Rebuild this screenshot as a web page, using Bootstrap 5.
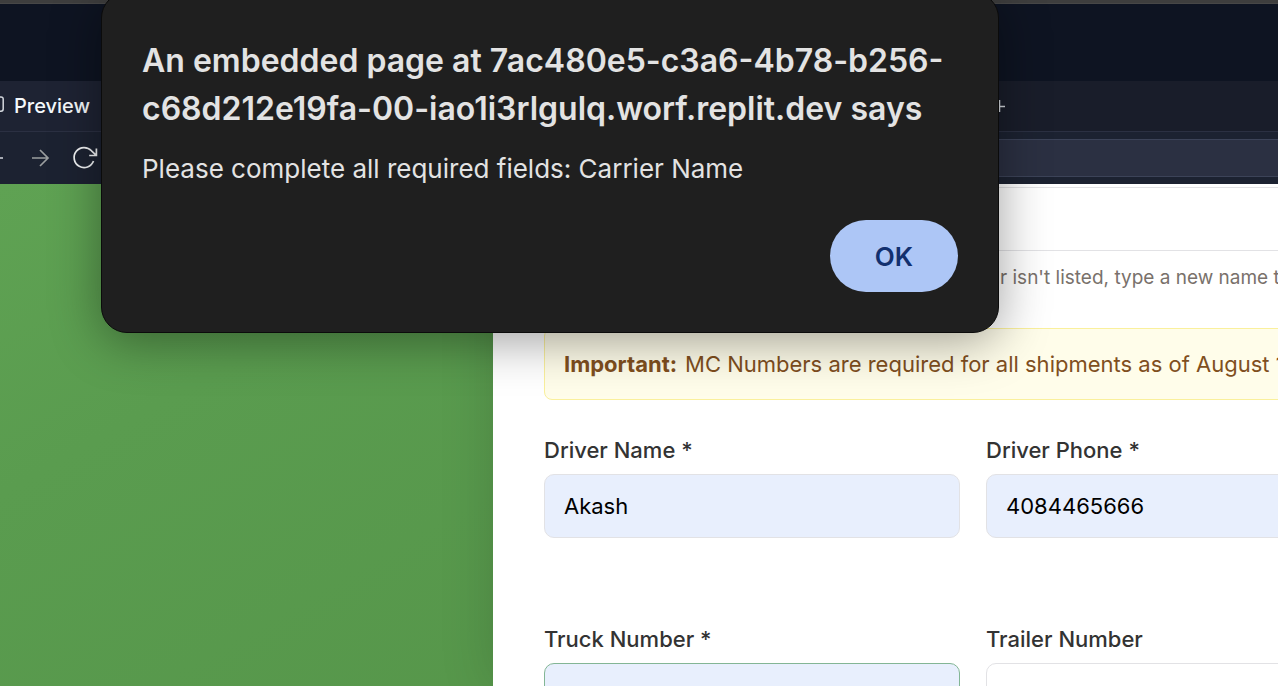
<!DOCTYPE html>
<html lang="en">
<head>
<meta charset="utf-8">
<meta name="viewport" content="width=device-width, initial-scale=1">
<title>Preview</title>
<link href="https://cdn.jsdelivr.net/npm/bootstrap@5.3.0/dist/css/bootstrap.min.css" rel="stylesheet">
<style>
  body { font-family: Inter, "Liberation Sans", sans-serif; background: #0e1422; }
  .window-edge { height: 4px; background: #3e3e3e; border-bottom: 1px solid #474747; }
  .workspace-bar { height: 77px; background: #0e1422; }
  .tab-strip { height: 51px; background: #191d2a; border-bottom: 1px solid #2b3042; }
  .tab-set { width: 1006px; }
  .tab-on { width: 380px; font-size: 20px; font-weight: 500; color: #f5f9fc; background: #1e2333; text-decoration: none; }
  .tab-on:hover { color: #fff; }
  .tool-strip { height: 52px; background: #1c2231; }
  .icon-btn { padding: 0; border: 0; background: none; line-height: 0; }
  .address { height: 38px; background: #2b3042; border: 1px solid #3c4358; border-right: 0; color: #f5f9fc; }
  .canvas-side { width: 493px; }
  .canvas { background: linear-gradient(150deg, #5fa253 0%, #5a9c4f 25%, #56964a 70%, #559449 100%); }
  .sheet { background: #fff; box-shadow: 0 0 50px rgba(0,0,0,.15); padding: 3px 0 0 51px; }
  .sheet-form { width: 858px; }
  .field { height: 64px; font-size: 22px; color: #000; padding: 0 19px; border: 1px solid #e2e2e5; border-radius: 10px; }
  .field-filled { background: #e8effd; }
  .field-valid { border-color: #83b695; }
  .form-label { font-size: 22px; line-height: 32px; font-weight: 500; color: #333; margin-bottom: 8px; }
  .hint { font-size: 19px; line-height: 28px; color: #79716b; margin-top: 13px; padding-left: 456px; }
  .notice { height: 72px; margin-top: 36px; padding: 0 19px; font-size: 22px; color: #804f1e; background: #fffdea; border: 1px solid #faf09c; border-radius: 8px; }
  .pair { display: grid; grid-template-columns: 1fr 1fr; column-gap: 26px; row-gap: 85px; margin-top: 34px; }
  .says { position: absolute; top: -8px; left: 101px; width: 898px; padding: 44px 40px 40px; background: #1f1f1f; border: 1px solid #0b0b0b; border-radius: 26px; color: #e3e3e3; box-shadow: 0 8px 50px rgba(0,0,0,.38); }
  .says h1 { font-size: 32px; line-height: 48px; font-weight: 600; margin: 0 0 16px; }
  .says p { font-size: 26px; line-height: 40px; margin: 0 0 31px; }
  .ok { width: 128px; height: 72px; border: 0; border-radius: 36px; background: #adc6f6; color: #12306f; font-size: 26px; font-weight: 600; }
</style>
</head>
<body class="vh-100 overflow-hidden d-flex flex-column position-relative">
  <div class="window-edge flex-shrink-0"></div>
  <header class="workspace-bar flex-shrink-0"></header>
  <nav class="tab-strip flex-shrink-0">
    <div class="tab-set h-100 d-flex justify-content-between">
      <a class="tab-on d-flex align-items-center gap-2" href="#">
        <svg width="6" height="20" viewBox="0 0 6 20" fill="none" stroke="#d5d9df" stroke-width="1.5"><path d="M-8 1H1Q3.200 1 3.200 3.200V13Q3.200 15.200 1 15.200H-8"/></svg>
        Preview
      </a>
      <button class="icon-btn" type="button" aria-label="New tab"><svg width="14" height="14" viewBox="0 0 14 14" fill="none" stroke="#d5d9df" stroke-width="1.500"><path d="M1 7.500h12M7.500 1v12"/></svg></button>
    </div>
  </nav>
  <div class="tool-strip flex-shrink-0 d-flex align-items-center">
    <button class="icon-btn" type="button" aria-label="Back"><svg width="20" height="20" viewBox="0 0 20 20" stroke="#d5d9df" stroke-width="1.500"><path d="M0 10h3"/></svg></button>
    <button class="icon-btn ms-2" type="button" aria-label="Forward"><svg width="24" height="24" viewBox="0 0 24 24" fill="none" stroke="#9b9e9f" stroke-width="1.700"><path d="M4 12h16M12 4l8 8-8 8"/></svg></button>
    <button class="icon-btn ms-3" type="button" aria-label="Reload"><svg width="30" height="28" viewBox="0 0 30 28" fill="none" stroke="#f1f3f5" stroke-width="1.700"><path d="M25.500 17A10 10 0 1 1 23.500 6.800L28 11.200M28.400 4.500v7h-7.200"/></svg></button>
    <input class="address flex-fill ms-5" type="text" aria-label="Address">
  </div>
  <main class="canvas flex-fill d-flex overflow-hidden">
    <div class="canvas-side flex-shrink-0"></div>
    <section class="sheet flex-fill overflow-hidden">
      <form class="sheet-form">
        <input class="field form-control" type="text" aria-label="Carrier Name">
        <div class="hint text-nowrap">r isn't listed, type a new name to</div>
        <div class="notice d-flex align-items-center text-nowrap"><strong class="me-2">Important:</strong><span class="ps-0">MC Numbers are required for all shipments as of August 1</span></div>
        <div class="pair">
          <div><label class="form-label d-block" for="driver">Driver Name *</label><input id="driver" class="field field-filled form-control" type="text" value="Akash"></div>
          <div><label class="form-label d-block" for="phone">Driver Phone *</label><input id="phone" class="field field-filled form-control" type="tel" value="4084465666"></div>
          <div><label class="form-label d-block" for="truck">Truck Number *</label><input id="truck" class="field field-filled field-valid form-control" type="text"></div>
          <div><label class="form-label d-block" for="trailer">Trailer Number</label><input id="trailer" class="field form-control" type="text"></div>
        </div>
      </form>
    </section>
  </main>
  <div class="says" role="alertdialog" aria-labelledby="saysTitle" aria-describedby="saysText">
    <h1 id="saysTitle">An embedded page at 7ac480e5-c3a6-4b78-b256-<br>c68d212e19fa-00-iao1i3rlgulq.worf.replit.dev says</h1>
    <p id="saysText">Please complete all required fields: Carrier Name</p>
    <div class="d-flex justify-content-end"><button class="ok" type="button">OK</button></div>
  </div>
<script src="https://cdn.jsdelivr.net/npm/bootstrap@5.3.0/dist/js/bootstrap.bundle.min.js"></script>
</body>
</html>
